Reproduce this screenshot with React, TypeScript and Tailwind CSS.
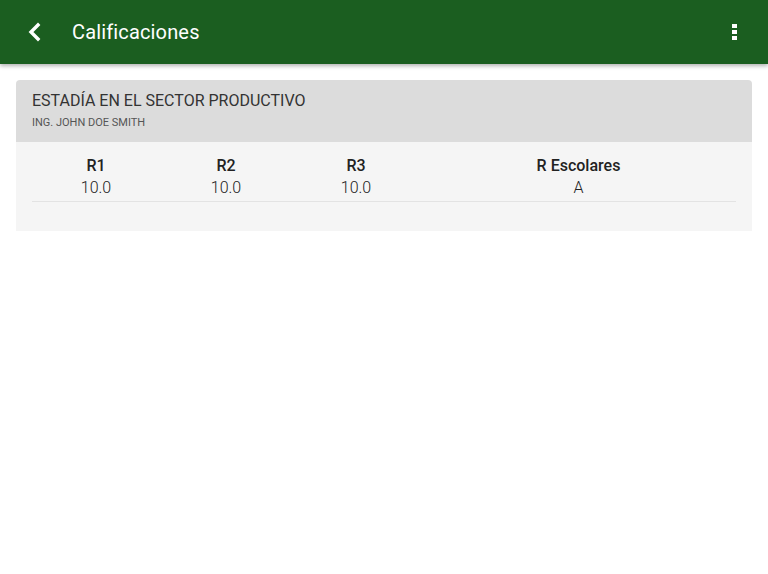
import React from "react";

type Grade = { label: string; value: string; width: string };

const grades: Grade[] = [
  { label: "R1", value: "10.0", width: "w-[130px]" },
  { label: "R2", value: "10.0", width: "w-[130px]" },
  { label: "R3", value: "10.0", width: "w-[130px]" },
  { label: "R Escolares", value: "A", width: "flex-1" },
];

function App() {
  return (
    <div className="w-[768px] h-[574px] bg-white font-['Roboto',sans-serif] text-[#212121]">
      <header className="h-16 bg-[#1b5e20] flex items-center shadow-[0_2px_4px_rgba(0,0,0,0.3)] relative z-10">
        <button className="w-[68px] h-16 flex items-center justify-center">
          <svg width="24" height="24" viewBox="0 0 24 24">
            <path d="M16 5 L9 12 L16 19" stroke="white" strokeWidth="3.4" fill="none" strokeLinecap="square" />
          </svg>
        </button>
        <h1 className="ml-1 text-white text-[20px] font-normal tracking-[0.15px]">Calificaciones</h1>
        <div className="ml-auto mr-[31px] flex flex-col gap-[2px]">
          <span className="w-[5px] h-[4px] bg-white" />
          <span className="w-[5px] h-[4px] bg-white" />
          <span className="w-[5px] h-[4px] bg-white" />
        </div>
      </header>

      <main className="px-4 pt-4">
        <section>
          <div className="bg-[#dcdcdc] rounded-t-[4px] px-4 pt-[10px] h-[62px]">
            <h2 className="text-[16px] text-[#333] leading-[22px]">ESTADÍA EN EL SECTOR PRODUCTIVO</h2>
            <p className="text-[11px] text-[#555] leading-[13px] mt-[4px]">ING. JOHN DOE SMITH</p>
          </div>
          <div className="bg-[#f5f5f5] pl-[15px] pr-4 pt-[14px] h-[89px]">
            <div className="flex border-b border-[#e3e3e3] ml-[1px] pb-[1px]">
              {grades.map((g, i) => (
                <div key={g.label} className={`${g.width} flex flex-col items-center ${i === 0 ? "-ml-[1px]" : ""}`}>
                  <span className="text-[16px] font-medium leading-[20px] text-[#222]">{g.label}</span>
                  <span className="text-[16px] font-light leading-[24px] text-[#222]">{g.value}</span>
                </div>
              ))}
            </div>
          </div>
        </section>
      </main>
    </div>
  );
}

export default App;
